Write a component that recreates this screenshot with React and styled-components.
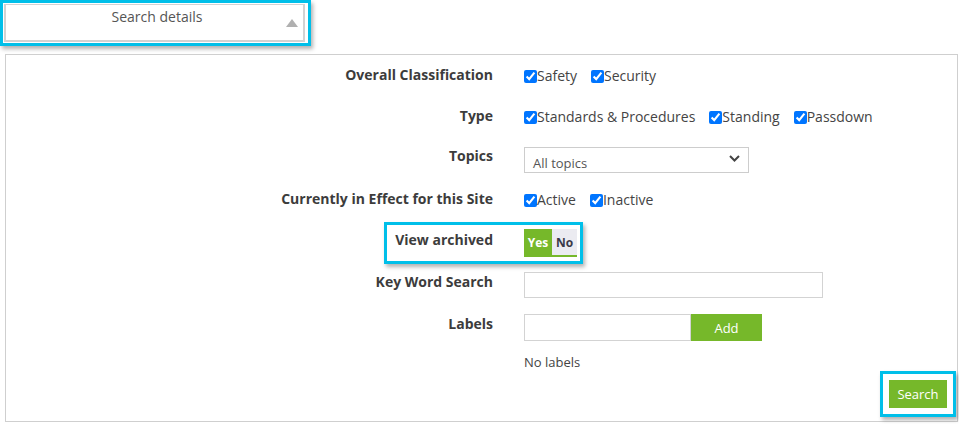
import styled, { createGlobalStyle } from "styled-components";

const GlobalStyle = createGlobalStyle`
  body {
    margin: 0;
    background: #fff;
    font-family: "Open Sans", "Liberation Sans", sans-serif;
    font-size: 14px;
    color: #444;
  }
`;

const Page = styled.div`
  width: 959px;
  height: 424px;
  overflow: hidden;
`;

const HeaderFrame = styled.div`
  width: 304px;
  height: 39px;
  border: 3px solid #00bfe9;
  padding: 1px 0 0 1px;
  box-shadow: 2px 3px 4px rgba(0, 0, 0, 0.3);
`;

const HeaderBox = styled.div`
  height: 35px;
  width: 297px;
  border: 2px solid #d2d2d2;
  border-top-width: 1px;
  display: grid;
  grid-template-columns: 1fr auto 1fr;
  align-items: start;
  background: #fff;
`;

const HeaderTitle = styled.div`
  grid-column: 2;
  color: #555;
  font-size: 14px;
  line-height: 20px;
  padding: 2px 0 0 5px;
`;

const Caret = styled.svg`
  grid-column: 3;
  justify-self: end;
  margin: 14px 5px 0 0;
`;

const Panel = styled.div`
  margin: 8px 1px 0 5px;
  border: 1px solid #cfcfcf;
  height: 368px;
  padding-top: 11px;
  box-sizing: border-box;
  display: flex;
  flex-direction: column;
`;

const Row = styled.div`
  position: relative;
  display: grid;
  grid-template-columns: 487px 1fr;
  column-gap: 31px;
  height: ${(p) => p.$h}px;
`;

const Label = styled.div`
  text-align: right;
  font-weight: 700;
  color: #3c3c3c;
  line-height: 20px;
  margin-top: ${(p) => p.$off || 0}px;
`;

const Value = styled.div`
  grid-column: 2;
  display: flex;
  align-items: flex-start;
  gap: 14px;
`;

const Check = styled.label`
  display: flex;
  align-items: center;
  line-height: 20px;
  color: #444;
  input {
    margin: 0;
    width: 13px;
    height: 13px;
    accent-color: #0075ff;
  }
`;

const SelectBox = styled.div`
  width: 225px;
  height: 26px;
  box-sizing: border-box;
  border: 1px solid #cdcdcd;
  display: flex;
  justify-content: space-between;
  align-items: flex-end;
  padding: 0 8px 0 8px;
  font-size: 13px;
  color: #555;
  svg {
    align-self: center;
    margin-bottom: 3px;
  }
`;

const TextBox = styled.div`
  width: ${(p) => p.$w}px;
  height: ${(p) => p.$hh || 26}px;
  box-sizing: border-box;
  border: 1px solid #d3d3d3;
  background: #fff;
`;

const Toggle = styled.div`
  display: flex;
  height: 28px;
  box-sizing: border-box;
  border-bottom: 2px solid #76b82a;
  font-size: 12px;
  font-weight: 700;
`;

const ToggleSide = styled.div`
  width: ${(p) => p.$w}px;
  display: flex;
  align-items: center;
  justify-content: center;
  background: ${(p) => (p.$on ? "#76b82a" : "#ebebf1")};
  color: ${(p) => (p.$on ? "#fff" : "#3a3a48")};
`;

const GreenButton = styled.button`
  border: none;
  background: #76b82a;
  color: #fff;
  font-family: "Open Sans", "Liberation Sans", sans-serif;
  font-size: 13px;
  width: ${(p) => p.$w}px;
  height: ${(p) => p.$hh}px;
  padding: 0;
`;

const Note = styled.div`
  font-size: 13px;
  line-height: 20px;
  color: #444;
`;

const Highlight = styled.div`
  border: 3px solid #00bfe9;
  box-shadow: 2px 3px 4px rgba(0, 0, 0, 0.3);
`;

const RowHighlight = styled(Highlight)`
  position: absolute;
  left: 378px;
  top: -7px;
  width: 193px;
  height: 36px;
  pointer-events: none;
`;

const ButtonRow = styled.div`
  display: flex;
  justify-content: flex-end;
  margin-right: 1px;
`;

const ButtonFrame = styled(Highlight)`
  padding: 6px;
  line-height: 0;
`;

const LabelInput = styled.div`
  display: flex;
`;

const options = (items) =>
  items.map((t) => (
    <Check key={t}>
      <input type="checkbox" defaultChecked />
      {t}
    </Check>
  ));

export default function App() {
  return (
    <Page>
      <GlobalStyle />
      <HeaderFrame>
        <HeaderBox>
          <HeaderTitle>Search details</HeaderTitle>
          <Caret width="12" height="8" viewBox="0 0 12 8">
            <polygon points="6,0 12,8 0,8" fill="#b0b0b0" />
          </Caret>
        </HeaderBox>
      </HeaderFrame>

      <Panel>
        <Row $h={41}>
          <Label $off={-1}>Overall Classification</Label>
          <Value>{options(["Safety", "Security"])}</Value>
        </Row>
        <Row $h={40}>
          <Label $off={-1}>Type</Label>
          <Value>{options(["Standards & Procedures", "Standing", "Passdown"])}</Value>
        </Row>
        <Row $h={43}>
          <Label $off={-1}>Topics</Label>
          <Value>
            <SelectBox>
              <span>All topics</span>
              <svg width="11" height="7" viewBox="0 0 11 7">
                <polyline points="1,1 5.5,5.5 10,1" fill="none" stroke="#444" strokeWidth="2" />
              </svg>
            </SelectBox>
          </Value>
        </Row>
        <Row $h={39}>
          <Label $off={-1}>Currently in Effect for this Site</Label>
          <Value>{options(["Active", "Inactive"])}</Value>
        </Row>
        <Row $h={43}>
          <Label $off={1}>View archived</Label>
          <Value>
            <Toggle>
              <ToggleSide $on $w={28}>Yes</ToggleSide>
              <ToggleSide $w={25}>No</ToggleSide>
            </Toggle>
          </Value>
          <RowHighlight />
        </Row>
        <Row $h={42}>
          <Label $off={0}>Key Word Search</Label>
          <Value>
            <TextBox $w={299} />
          </Value>
        </Row>
        <Row $h={38}>
          <Label $off={0}>Labels</Label>
          <Value>
            <LabelInput>
              <TextBox $w={167} $hh={27} />
              <GreenButton $w={71} $hh={27}>Add</GreenButton>
            </LabelInput>
          </Value>
        </Row>
        <Row $h={19}>
          <Value>
            <Note>No labels</Note>
          </Value>
        </Row>
        <ButtonRow>
          <ButtonFrame>
            <GreenButton $w={58} $hh={28}>Search</GreenButton>
          </ButtonFrame>
        </ButtonRow>
      </Panel>
    </Page>
  );
}
